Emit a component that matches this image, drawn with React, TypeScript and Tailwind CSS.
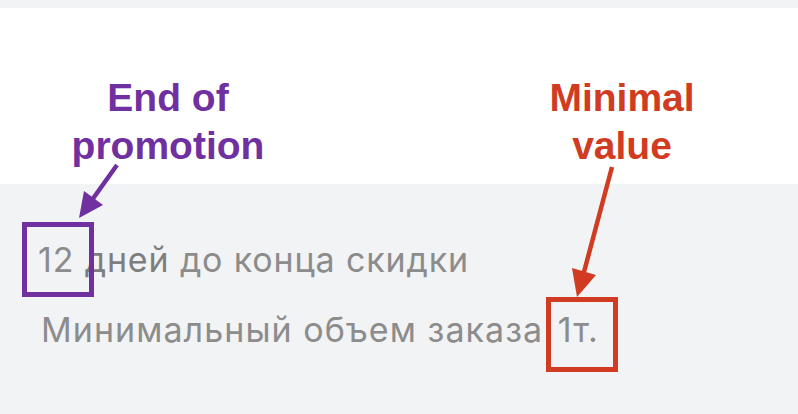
import React from 'react';

const Annotations: React.FC = () => {
  return (
    <div className="pointer-events-none absolute inset-0">
      <div className="absolute left-[68px] top-[74px] w-[200px] text-center text-[39px] font-bold leading-[48px] text-[#7030a0] [font-family:'Liberation_Sans',Arial,sans-serif]">
        End of
        <br />
        promotion
      </div>
      <div className="absolute left-[522px] top-[74px] w-[200px] text-center text-[39px] font-bold leading-[48px] text-[#d03b22] [font-family:'Liberation_Sans',Arial,sans-serif]">
        Minimal
        <br />
        value
      </div>

      <svg className="absolute inset-0" width="798" height="414" viewBox="0 0 798 414">
        {/* purple arrow + box */}
        <line x1="117" y1="165" x2="92" y2="200" stroke="#7030a0" strokeWidth="4.5" />
        <polygon points="79,218 84,191 103,205" fill="#7030a0" />
        <rect x="24.5" y="224.5" width="67" height="70" fill="none" stroke="#7030a0" strokeWidth="5" />

        {/* red arrow + box */}
        <line x1="612" y1="167" x2="584" y2="272" stroke="#d03b22" strokeWidth="4.5" />
        <polygon points="577,297 572,268 596,275" fill="#d03b22" />
        <rect x="548.5" y="299.5" width="67" height="70" fill="none" stroke="#d03b22" strokeWidth="5" />
      </svg>
    </div>
  );
};

const App: React.FC = () => {
  return (
    <div className="relative h-[414px] w-[798px] overflow-hidden bg-[#f2f3f5] [font-family:Inter,'Noto_Sans',sans-serif]">
      <div className="h-[8px] bg-[#f2f3f5]" />
      <div className="h-[176px] bg-white" />

      <div className="flex flex-col pt-[56px] text-[34px] leading-[40px] text-[#8c8c8c]">
        <p className="pl-[38px] tracking-[0.85px]">
          12 <span className="text-[#7e7e7e]">дней</span> до конца скидки
        </p>
        <p className="mt-[30px] pl-[41px] tracking-[1.05px]">
          Минимальный объем заказа <span className="ml-[4px]">1т.</span>
        </p>
      </div>

      <Annotations />
    </div>
  );
};

export default App;
